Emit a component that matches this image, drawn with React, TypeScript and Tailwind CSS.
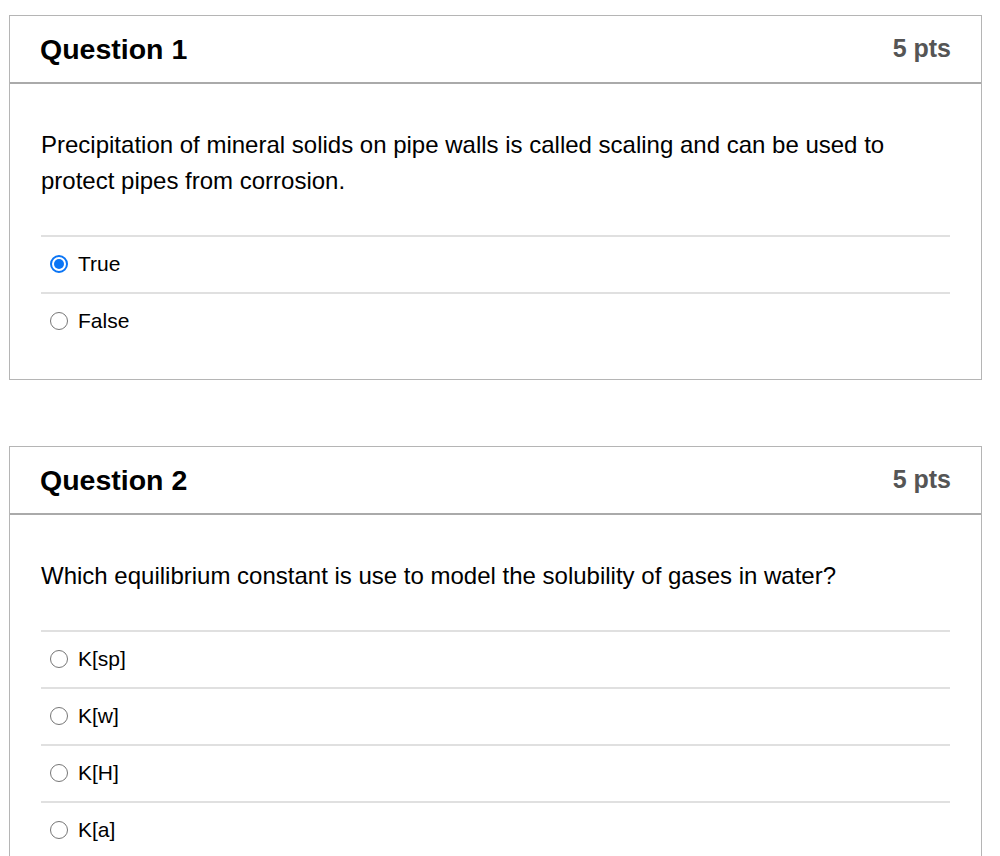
import { useState } from "react";

type Q = {
  title: string;
  pts: string;
  text: string;
  options: string[];
  selected: number | null;
};

const questions: Q[] = [
  {
    title: "Question 1",
    pts: "5 pts",
    text: "Precipitation of mineral solids on pipe walls is called scaling and can be used to protect pipes from corrosion.",
    options: ["True", "False"],
    selected: 0,
  },
  {
    title: "Question 2",
    pts: "5 pts",
    text: "Which equilibrium constant is use to model the solubility of gases in water?",
    options: ["K[sp]", "K[w]", "K[H]", "K[a]"],
    selected: null,
  },
];

function Radio({ checked }: { checked: boolean }) {
  if (checked) {
    return (
      <span className="flex h-[18px] w-[18px] shrink-0 items-center justify-center rounded-full border-2 border-[#0b75f5]">
        <span className="h-[10px] w-[10px] rounded-full bg-[#0b75f5]" />
      </span>
    );
  }
  return <span className="h-[18px] w-[18px] shrink-0 rounded-full border-[1.5px] border-[#767676] bg-white" />;
}

function QuestionCard({ q }: { q: Q }) {
  const [sel, setSel] = useState<number | null>(q.selected);
  return (
    <div className="ml-[9px] w-[973px] border border-[#b5b5b5] bg-white">
      <div className="flex h-[68px] items-center justify-between border-b-2 border-[#aaaaaa] px-[30px]">
        <h2 className="text-[28.5px] font-bold text-black">{q.title}</h2>
        <span className="text-[25px] font-bold text-[#555555]">{q.pts}</span>
      </div>
      <div className="px-[31px] pt-[43px] pb-[30px]">
        <p className="pr-[40px] text-[24px] leading-[36px] text-black">{q.text}</p>
        <div className="mt-[36px]">
          {q.options.map((o, i) => (
            <label
              key={o}
              onClick={() => setSel(i)}
              className="flex h-[57px] cursor-pointer items-center gap-[10px] border-t-2 border-[#e0e0e0] pb-[2px] pl-[9px] text-[21px] text-black"
            >
              <Radio checked={sel === i} />
              <span>{o}</span>
            </label>
          ))}
        </div>
      </div>
    </div>
  );
}

export default function App() {
  return (
    <div className="h-[856px] overflow-hidden bg-white pt-[15px] font-['Liberation_Sans',Arial,sans-serif]">
      <div className="flex flex-col gap-[66px]">
        {questions.map((q) => (
          <QuestionCard key={q.title} q={q} />
        ))}
      </div>
    </div>
  );
}
